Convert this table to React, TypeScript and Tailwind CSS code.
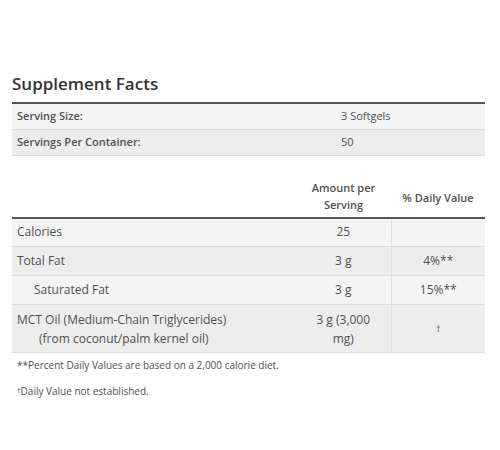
const rows = [
  { name: "Calories", amount: "25", dv: "", indent: false },
  { name: "Total Fat", amount: "3 g", dv: "4%**", indent: false },
  { name: "Saturated Fat", amount: "3 g", dv: "15%**", indent: true },
];

export default function App() {
  return (
    <div className="w-[500px] h-[450px] bg-white px-3 pt-[72px] text-[#505050] font-['Open_Sans',sans-serif]">
      <h2 className="text-[17px] font-semibold text-[#333] leading-6 mb-[6px]">Supplement Facts</h2>
      <table className="w-[473px] border-collapse text-[11px]">
        <tbody className="border-t-2 border-[#555]">
          <tr className="bg-[#f4f4f4] border-b border-[#dedede] h-[26px]">
            <td className="pl-[5px] font-semibold w-[329px]">Serving Size:</td>
            <td>3 Softgels</td>
          </tr>
          <tr className="bg-[#ededed] border-b border-[#dedede] h-[26px]">
            <td className="pl-[5px] font-semibold">Servings Per Container:</td>
            <td>50</td>
          </tr>
        </tbody>
      </table>
      <table className="w-[473px] border-collapse text-[12px] mt-[22px]">
        <thead>
          <tr className="h-[40px] text-[11px] leading-[17px] align-middle">
            <th className="w-[284px]"></th>
            <th className="w-[95px] font-semibold pb-[3px]">Amount per<br />Serving</th>
            <th className="font-semibold">% Daily Value</th>
          </tr>
        </thead>
        <tbody className="border-t-2 border-[#555]">
          {rows.map((r, i) => (
            <tr key={r.name} className={`h-[29px] border-b border-[#dedede] ${i % 2 === 0 ? "bg-[#f4f4f4]" : "bg-[#ededed]"}`}>
              <td className={r.indent ? "pl-[22px]" : "pl-[5px]"}>{r.name}</td>
              <td className="text-center border-r border-[#dedede]">{r.amount}</td>
              <td className="text-center">{r.dv}</td>
            </tr>
          ))}
          <tr className="h-[48px] border-b border-[#dedede] bg-[#ededed] leading-[19px]">
            <td className="pl-[5px]">
              MCT Oil (Medium-Chain Triglycerides)
              <br />
              <span className="pl-[22px]">(from coconut/palm kernel oil)</span>
            </td>
            <td className="text-center border-r border-[#dedede]">
              3 g (3,000
              <br />
              mg)
            </td>
            <td className="text-center text-[9px]">†</td>
          </tr>
        </tbody>
      </table>
      <p className="text-[10px] pl-[5px] mt-[4px] leading-4">**Percent Daily Values are based on a 2,000 calorie diet.</p>
      <p className="text-[10px] pl-[5px] mt-[10px] leading-4">
        <span className="text-[7px] align-top">†</span>Daily Value not established.
      </p>
    </div>
  );
}
